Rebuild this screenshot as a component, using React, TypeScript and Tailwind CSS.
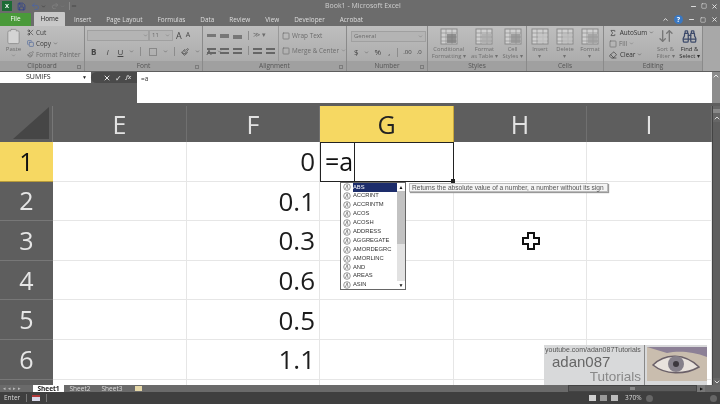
import { ArrowDownUp, Binoculars, ChevronDown, ChevronUp, Clipboard, Copy, Eraser, Minus, Paintbrush, Scissors, Sigma, Square, X, Save, Undo2, Redo2 } from 'lucide-react';
import type { ReactNode } from 'react';

const tabs = ['Insert', 'Page Layout', 'Formulas', 'Data', 'Review', 'View', 'Developer', 'Acrobat'];
const funcs = ['ABS', 'ACCRINT', 'ACCRINTM', 'ACOS', 'ACOSH', 'ADDRESS', 'AGGREGATE', 'AMORDEGRC', 'AMORLINC', 'AND', 'AREAS', 'ASIN'];
const columns = ['E', 'F', 'G', 'H', 'I'];
const values = ['0', '0.1', '0.3', '0.6', '0.5', '1.1'];

function Group({ label, width, launcher, children }: { label: string; width: string; launcher?: boolean; children: ReactNode }) {
  return (
    <div className={`${width} h-full flex flex-col border-r border-[#8a8a8a] shrink-0 relative`}>
      <div className="flex-1 min-h-0 flex">{children}</div>
      <div className="h-[10px] text-center text-[6.5px] leading-[9px] text-[#555] bg-[#a0a0a0]">{label}</div>
      {launcher && <div className="absolute right-[3px] bottom-[2px] w-[4px] h-[4px] border border-[#7c7c7c]" />}
    </div>
  );
}

function GridIcon({ accent }: { accent: string }) {
  return (
    <svg width="18" height="17" viewBox="0 0 18 17">
      <rect x="1" y="1" width="16" height="15" fill="#d0d0d0" stroke="#8a8a8a" />
      <path d="M1 5h16M1 9h16M1 13h16M6 1v15M12 1v15" stroke="#909090" strokeWidth="0.7" />
      <rect x="7" y="6" width="9" height="9" fill={accent} opacity="0.75" />
    </svg>
  );
}

function BigButton({ lines, width, dark, icon }: { lines: string[]; width: string; dark?: boolean; icon: ReactNode }) {
  return (
    <div className={`${width} flex flex-col items-center pt-[1px]`}>
      <div className="h-[18px] flex items-center justify-center">{icon}</div>
      <div className={`mt-[1px] text-[5.8px] leading-[7px] text-center whitespace-nowrap ${dark ? 'text-[#2a2a2a]' : 'text-[#6f6f6f]'}`}>
        {lines.map(l => <div key={l}>{l}</div>)}
      </div>
    </div>
  );
}

function Ribbon() {
  return (
    <div className="h-[45px] flex bg-gradient-to-b from-[#bebebe] to-[#a8a8a8] text-[#6c6c6c] text-[6.4px]">
      <Group label="Clipboard" width="w-[85px]" launcher>
        <div className="w-[27px] flex flex-col items-center pt-[2px]">
          <Clipboard size={17} strokeWidth={1.2} className="text-[#8c8c8c] fill-[#d4d4d4]" />
          <div className="text-[6px] leading-[7px] mt-[1px]">Paste</div>
          <ChevronDown size={5} />
        </div>
        <div className="flex flex-col gap-[2px] pt-[2px]">
          <div className="h-[9px] flex items-center gap-[2px] text-[#3c3c3c]"><Scissors size={7} />Cut</div>
          <div className="h-[9px] flex items-center gap-[2px] text-[#3c3c3c]"><Copy size={7} className="text-[#45609a]" />Copy <ChevronDown size={5} /></div>
          <div className="h-[9px] flex items-center gap-[2px] whitespace-nowrap"><Paintbrush size={7} />Format Painter</div>
        </div>
      </Group>
      <Group label="Font" width="w-[118px]" launcher>
        <div className="flex-1 px-[2px] pt-[4px]">
          <div className="flex items-center h-[11px]">
            <div className="w-[62px] h-full bg-[#b4b4b4] border border-[#a0a0a0] flex justify-end items-center"><ChevronDown size={5} /></div>
            <div className="w-[24px] h-full bg-[#b4b4b4] border border-[#a0a0a0] flex justify-between items-center px-[2px] text-[6px]">11<ChevronDown size={5} /></div>
            <span className="ml-[3px] text-[9px] text-[#444]">A</span><span className="text-[7px] text-[#444] ml-[4px]">A</span>
          </div>
          <div className="flex items-center gap-[6px] mt-[6px] h-[9px] text-[#444] text-[8px]">
            <b className="ml-[4px] font-bold">B</b><i className="ml-[4px]">I</i><u className="ml-[3px]">U</u><ChevronDown size={5} />
            <div className="w-px h-[9px] bg-[#8c8c8c]" />
            <div className="w-[8px] h-[8px] border border-[#888] ml-[2px]" /><ChevronDown size={5} />
            <div className="w-px h-[9px] bg-[#8c8c8c]" />
            <Paintbrush size={8} /><ChevronDown size={5} /><span>A</span><ChevronDown size={5} />
          </div>
        </div>
      </Group>
      <Group label="Alignment" width="w-[144px]" launcher>
        <div className="w-[75px] pl-[4px] pt-[5px]">
          <div className="flex gap-[4px] items-center h-[9px]">
            <div className="w-[9px] h-[3px] bg-[#777]" /><div className="w-[9px] h-[4px] bg-[#777]" /><div className="w-[9px] h-[4px] mt-[3px] bg-[#777]" />
            <div className="w-px h-[9px] bg-[#8c8c8c] ml-[2px]" />
            <div className="text-[7px]">≫ ▾</div>
          </div>
          <div className="flex gap-[4px] items-center h-[9px] mt-[6px]">
            <div className="w-[9px] h-[6px] border-y-2 border-[#666]" /><div className="w-[9px] h-[6px] border-y-2 border-[#666]" /><div className="w-[9px] h-[6px] border-y-2 border-[#666]" />
            <div className="w-px h-[9px] bg-[#8c8c8c] ml-[2px]" />
            <div className="w-[9px] h-[6px] border-y-2 border-[#666]" /><div className="w-[9px] h-[6px] border-y-2 border-[#666]" />
          </div>
        </div>
        <div className="flex-1 border-l border-[#999] pl-[3px] pt-[4px]">
          <div className="h-[11px] flex items-center gap-[2px] whitespace-nowrap"><Square size={8} />Wrap Text</div>
          <div className="h-[11px] mt-[4px] flex items-center gap-[2px] whitespace-nowrap"><Square size={8} />Merge &amp; Center <ChevronDown size={5} /></div>
        </div>
      </Group>
      <Group label="Number" width="w-[81px]" launcher>
        <div className="flex-1 pt-[5px] pl-[4px] pr-[1px]">
          <div className="h-[11px] bg-[#b4b4b4] border border-[#a0a0a0] flex justify-between items-center px-[2px] text-[6px]">General<ChevronDown size={5} /></div>
          <div className="flex items-center gap-[5px] mt-[4px] text-[#444] text-[8px]">
            <span className="ml-[3px]">$</span><ChevronDown size={5} /><span className="ml-[1px]">%</span><span className="ml-[2px]">,</span>
            <div className="w-px h-[9px] bg-[#8c8c8c] ml-[2px]" /><span className="text-[6px]">.00</span><span className="text-[6px]">.0</span>
          </div>
        </div>
      </Group>
      <Group label="Styles" width="w-[99px]">
        <BigButton width="w-[42px]" lines={['Conditional', 'Formatting ▾']} icon={<GridIcon accent="#7a7a7a" />} />
        <BigButton width="w-[30px]" lines={['Format', 'as Table ▾']} icon={<GridIcon accent="#a8a8a8" />} />
        <BigButton width="w-[27px]" lines={['Cell', 'Styles ▾']} icon={<GridIcon accent="#8e8e8e" />} />
      </Group>
      <Group label="Cells" width="w-[77px]">
        <BigButton width="w-[26px]" lines={['Insert', '▾']} icon={<GridIcon accent="#c4c4c4" />} />
        <BigButton width="w-[24px]" lines={['Delete', '▾']} icon={<GridIcon accent="#bcbcbc" />} />
        <BigButton width="w-[26px]" lines={['Format', '▾']} icon={<GridIcon accent="#9a9a9a" />} />
      </Group>
      <Group label="Editing" width="w-[99px]">
        <div className="w-[50px] flex flex-col gap-[2px] pt-[2px] pl-[5px]">
          <div className="h-[9px] flex items-center gap-[2px] text-[#333] whitespace-nowrap"><Sigma size={8} className="mr-[1px]" />AutoSum <ChevronDown size={5} /></div>
          <div className="h-[9px] flex items-center gap-[2px]"><Square size={8} />Fill <ChevronDown size={5} /></div>
          <div className="h-[9px] flex items-center gap-[2px] text-[#333]"><Eraser size={8} className="mr-[1px]" />Clear <ChevronDown size={5} /></div>
        </div>
        <BigButton width="w-[23px]" lines={['Sort &', 'Filter ▾']} icon={<ArrowDownUp size={16} className="text-[#777]" />} />
        <BigButton width="w-[25px]" dark lines={['Find &', 'Select ▾']} icon={<Binoculars size={15} className="text-[#3d4a6a]" />} />
      </Group>
      <div className="flex-1 bg-[#a8a8a8]" />
    </div>
  );
}

function FormulaBar() {
  return (
    <div className="h-[31px] flex bg-[#5e5e5e] mt-px">
      <div className="w-[137px]">
        <div className="h-[11px] flex items-center text-[7px]">
          <div className="w-[91px] h-full bg-white flex items-center justify-between pl-[26px] pr-[4px] text-[#222]">SUMIFS<span className="text-[5px]">▼</span></div>
          <div className="flex-1 h-full bg-[#4a4a4a] rounded-l-full flex items-center gap-[4px] pl-[12px] text-[#e8e8e8]">
            <X size={8} strokeWidth={3} /><span className="text-[8px] leading-none">✓</span><i className="text-[7px] font-serif">fx</i>
          </div>
        </div>
      </div>
      <div className="flex-1 bg-white pl-[4px] pt-[2px] text-[6.5px] text-[#333]">=a</div>
      <div className="w-[8px] bg-[#8c8c8c] flex flex-col items-center text-[#ececec]"><ChevronUp size={8} strokeWidth={3} /></div>
    </div>
  );
}

function Sheet() {
  const head = 'text-[25px] leading-none flex items-center justify-center';
  return (
    <div className="relative h-[279px] mt-[3px] overflow-hidden bg-white font-['Open_Sans',sans-serif]">
      <div className="grid grid-cols-[53px_134px_133px_134px_133px_125px_8px] grid-rows-[36px_repeat(6,39.6px)_6px]">
        <div className="bg-[#5e5e5e] flex items-end justify-end p-[3px] border-r border-[#777]">
          <svg width="36" height="32" viewBox="0 0 36 32"><path d="M36 0v32H0z" fill="#464646" /></svg>
        </div>
        {columns.map(c => (
          <div key={c} className={`${head} border-r ${c === 'G' ? 'bg-[#f6d862] text-[#222] border-[#c8a83c]' : 'bg-[#5e5e5e] text-[#e2e2e2] border-[#707070]'}`}>{c}</div>
        ))}
        <div className="row-span-8 bg-[#666] border-l border-[#444] flex flex-col items-center text-[#d8d8d8]">
          <div className="w-full h-[4px] bg-[#888] mb-[1px] mt-[3px]" />
          <ChevronUp size={8} strokeWidth={3} />
          <div className="flex-1 w-full bg-[#5e5e5e]" />
          <ChevronDown size={8} strokeWidth={3} />
        </div>
        {values.map((v, i) => [
          <div key={`r${i}`} className={`${head} border-b ${i === 0 ? 'bg-[#f6d862] text-[#111] border-[#b69a3a]' : 'bg-[#5e5e5e] text-[#e6e6e6] border-[#777]'}`}>{i + 1}</div>,
          ...columns.map(c => {
            if (c === 'G' && i === 0) {
              return (
                <div key={c + i} className="border border-[#222] flex items-center text-[25px] leading-none text-[#111] relative">
                  <div className="w-[34px] h-full border-r border-[#222] pl-[4px] flex items-center">=a</div>
                  <div className="absolute -right-[2px] -bottom-[2px] w-[4px] h-[4px] bg-[#222]" />
                </div>
              );
            }
            return (
              <div key={c + i} className="border-r border-b border-[#e6e6e6] flex items-center justify-end pr-[4px] text-[26px] leading-none text-[#1c1c1c]">
                {c === 'F' ? v : ''}
              </div>
            );
          }),
        ])}
        <div className="bg-[#5e5e5e]" />
        {columns.map(c => <div key={c} className="border-r border-[#e6e6e6]" />)}
      </div>

      {/* autocomplete list */}
      <div className="absolute left-[340px] top-[76px] w-[66px] h-[108px] bg-white border border-[#666] flex font-['Liberation_Sans',sans-serif]">
        <div className="flex-1 min-w-0">
          {funcs.map((f, i) => (
            <div key={f} className="h-[8.9px] flex items-center gap-[2px] pl-[2px] text-[5.8px] leading-none text-[#333]">
              <svg width="8" height="8" viewBox="0 0 8 8" className="shrink-0"><circle cx="4" cy="4" r="3.3" fill="none" stroke="#555" strokeWidth="0.6" /><path d="M2.4 6 4.2 1.8 5 6" fill="none" stroke="#555" strokeWidth="0.6" /></svg>
              <span className={`flex-1 h-full flex items-center ${i === 0 ? 'bg-[#1d2d6b] text-white' : ''}`}>{f}</span>
            </div>
          ))}
        </div>
        <div className="w-[8px] bg-[#e2e2e2] flex flex-col items-center text-[#111]">
          <span className="h-[8px] text-[5px] leading-[8px] bg-white w-full text-center">▲</span>
          <div className="w-full h-[53px] bg-[#c2c2c2]" />
          <div className="flex-1" />
          <span className="h-[8px] text-[5px] leading-[8px] bg-white w-full text-center">▼</span>
        </div>
      </div>

      {/* function tooltip */}
      <div className="absolute left-[409px] top-[77px] h-[9px] w-[199px] bg-[#f4f4f4] border border-[#bbb] shadow-[1px_1px_1px_#999] pl-[2px] text-[6.6px] leading-[7px] text-[#555] whitespace-nowrap font-['Liberation_Sans',sans-serif]">
        Returns the absolute value of a number, a number without its sign
      </div>

      {/* mouse cursor */}
      <svg className="absolute left-[522px] top-[126px]" width="18" height="18" viewBox="0 0 18 18">
        <path d="M6 1h6v5h5v6h-5v5H6v-5H1V6h5z" fill="#fff" stroke="#111" strokeWidth="2" />
      </svg>

      {/* channel watermark */}
      <div className="absolute left-[544px] top-[239px] w-[163px] h-[40px] bg-[#d8d9da] flex font-['Liberation_Sans',sans-serif]">
        <div className="w-[101px] border-r border-[#888] text-[#555] overflow-hidden">
          <div className="text-[7px] leading-[8px] mt-[1px] pl-[1px] whitespace-nowrap">youtube.com/adan087Tutorials</div>
          <div className="text-[15px] leading-[15px] ml-[8px] text-[#666]">adan087</div>
          <div className="text-[13.5px] leading-[15px] text-right pr-[3px] text-[#888]">Tutorials</div>
        </div>
        <svg width="60" height="34" viewBox="0 0 60 34" className="ml-[2px] mt-[2px]">
          <rect width="60" height="34" fill="#c9bdae" />
          <path d="M0 0h60v10C45 4 30 4 20 6z" fill="#8c8096" />
          <path d="M6 18C18 6 38 6 52 20 38 28 18 28 6 18z" fill="#e8e2dc" stroke="#6a6068" strokeWidth="1.5" />
          <circle cx="29" cy="17" r="8" fill="#85808a" />
          <circle cx="29" cy="17" r="3" fill="#3c383e" />
        </svg>
      </div>
    </div>
  );
}

export default function App() {
  return (
    <div className="w-[720px] h-[404px] overflow-hidden bg-[#5e5e5e] flex flex-col font-['Open_Sans',sans-serif] blur-[0.35px]">
      <div className="h-[12px] flex items-center bg-[#6c6c6c] text-[#d0d0d0] text-[7px] relative">
        <div className="flex items-center pl-[2px] w-[325px]">
          <div className="w-[10px] h-[10px] bg-[#1d6b35] text-white text-[6px] leading-[10px] text-center font-bold">X</div>
          <Save size={9} className="ml-[5px] text-[#2b3d8f]" />
          <Undo2 size={9} className="ml-[5px] text-[#4a63a8]" />
          <ChevronDown size={5} className="ml-[1px] text-[#222]" />
          <Redo2 size={8} className="ml-[5px] text-[#858585]" />
          <ChevronDown size={5} className="ml-[1px] text-[#858585]" />
          <div className="w-px h-[8px] bg-[#888] ml-[4px]" />
          <Minus size={6} className="ml-[1px] text-[#222]" />
        </div>
        <div>Book1 - Microsoft Excel</div>
        <div className="ml-auto flex items-center gap-[4px] pr-[2px] text-[#ececec]">
          <Minus size={7} strokeWidth={3} /><Square size={6} /><X size={7} strokeWidth={3} />
        </div>
      </div>
      <div className="h-[14px] flex items-end bg-[#6c6c6c] text-[6.4px] text-[#dedede]">
        <div className="w-[31px] h-[13px] bg-[#4a9a3a] text-white text-center leading-[12px] rounded-t-[1px]">File</div>
        <div className="w-[31px] h-[14px] ml-[3px] bg-[#c8c8c8] text-[#222] text-center leading-[14px] rounded-t-[1px]">Home</div>
        <div className="flex gap-[15px] ml-[9px] h-[13px] leading-[13px] whitespace-nowrap">
          {tabs.map(t => <span key={t}>{t}</span>)}
        </div>
        <div className="ml-auto h-[13px] flex items-center gap-[5px] pr-[2px] text-[#ececec]">
          <ChevronUp size={7} strokeWidth={3} />
          <div className="w-[9px] h-[9px] rounded-full bg-[#3a78c2] text-white text-[7px] leading-[9px] text-center font-bold">?</div>
          <Minus size={7} strokeWidth={3} /><Square size={6} /><X size={7} strokeWidth={3} />
        </div>
      </div>
      <Ribbon />
      <FormulaBar />
      <Sheet />
      <div className="h-[7px] flex items-center bg-[#6a6a6a] text-[6.5px] text-[#dcdcdc]">
        <div className="w-[33px] pl-[3px] text-[5px] leading-[7px] tracking-[2px] text-[#bbb] whitespace-nowrap">◂◂▸▸</div>
        <div className="w-[31px] h-full bg-white text-[#222] font-bold text-center leading-[7px]">Sheet1</div>
        <div className="w-[32px] text-center leading-[7px]">Sheet2</div>
        <div className="w-[32px] text-center leading-[7px]">Sheet3</div>
        <div className="w-[7px] h-[5px] bg-[#e6d8a8] ml-[7px]" />
        <div className="ml-[426px] w-[129px] h-full bg-[#5a5a5a] border border-[#444] flex items-center justify-center"><div className="w-[5px] h-[3px] bg-[#8a8a8a]" /></div>
        <div className="w-[8px] h-full bg-[#777] text-[4px] leading-[7px] text-center text-[#111]">▶</div>
      </div>
      <div className="h-[12px] flex items-center bg-[#3f3f3f] text-[6.5px] text-[#dadada]">
        <span className="pl-[4px] w-[26px]">Enter</span>
        <div className="w-px h-[8px] bg-[#777]" />
        <div className="w-[8px] h-[6px] ml-[5px] bg-[#d8d8e8] border-t-2 border-[#b03838]" />
        <div className="w-px h-[8px] bg-[#777] ml-[6px]" />
        <div className="ml-auto flex items-center">
          <div className="w-[7px] h-[6px] bg-[#d0d0d0]" />
          <div className="w-[7px] h-[6px] bg-[#999] ml-[4px]" />
          <div className="w-[7px] h-[6px] bg-[#bbb] ml-[4px]" />
          <span className="ml-[7px] w-[18px]">370%</span>
          <div className="w-[7px] h-[7px] rounded-full bg-[#666] ml-[3px]" />
          <div className="w-[57px]" />
          <div className="w-[7px] h-[7px] rounded-full bg-[#666] mr-[3px]" />
        </div>
      </div>
    </div>
  );
}
